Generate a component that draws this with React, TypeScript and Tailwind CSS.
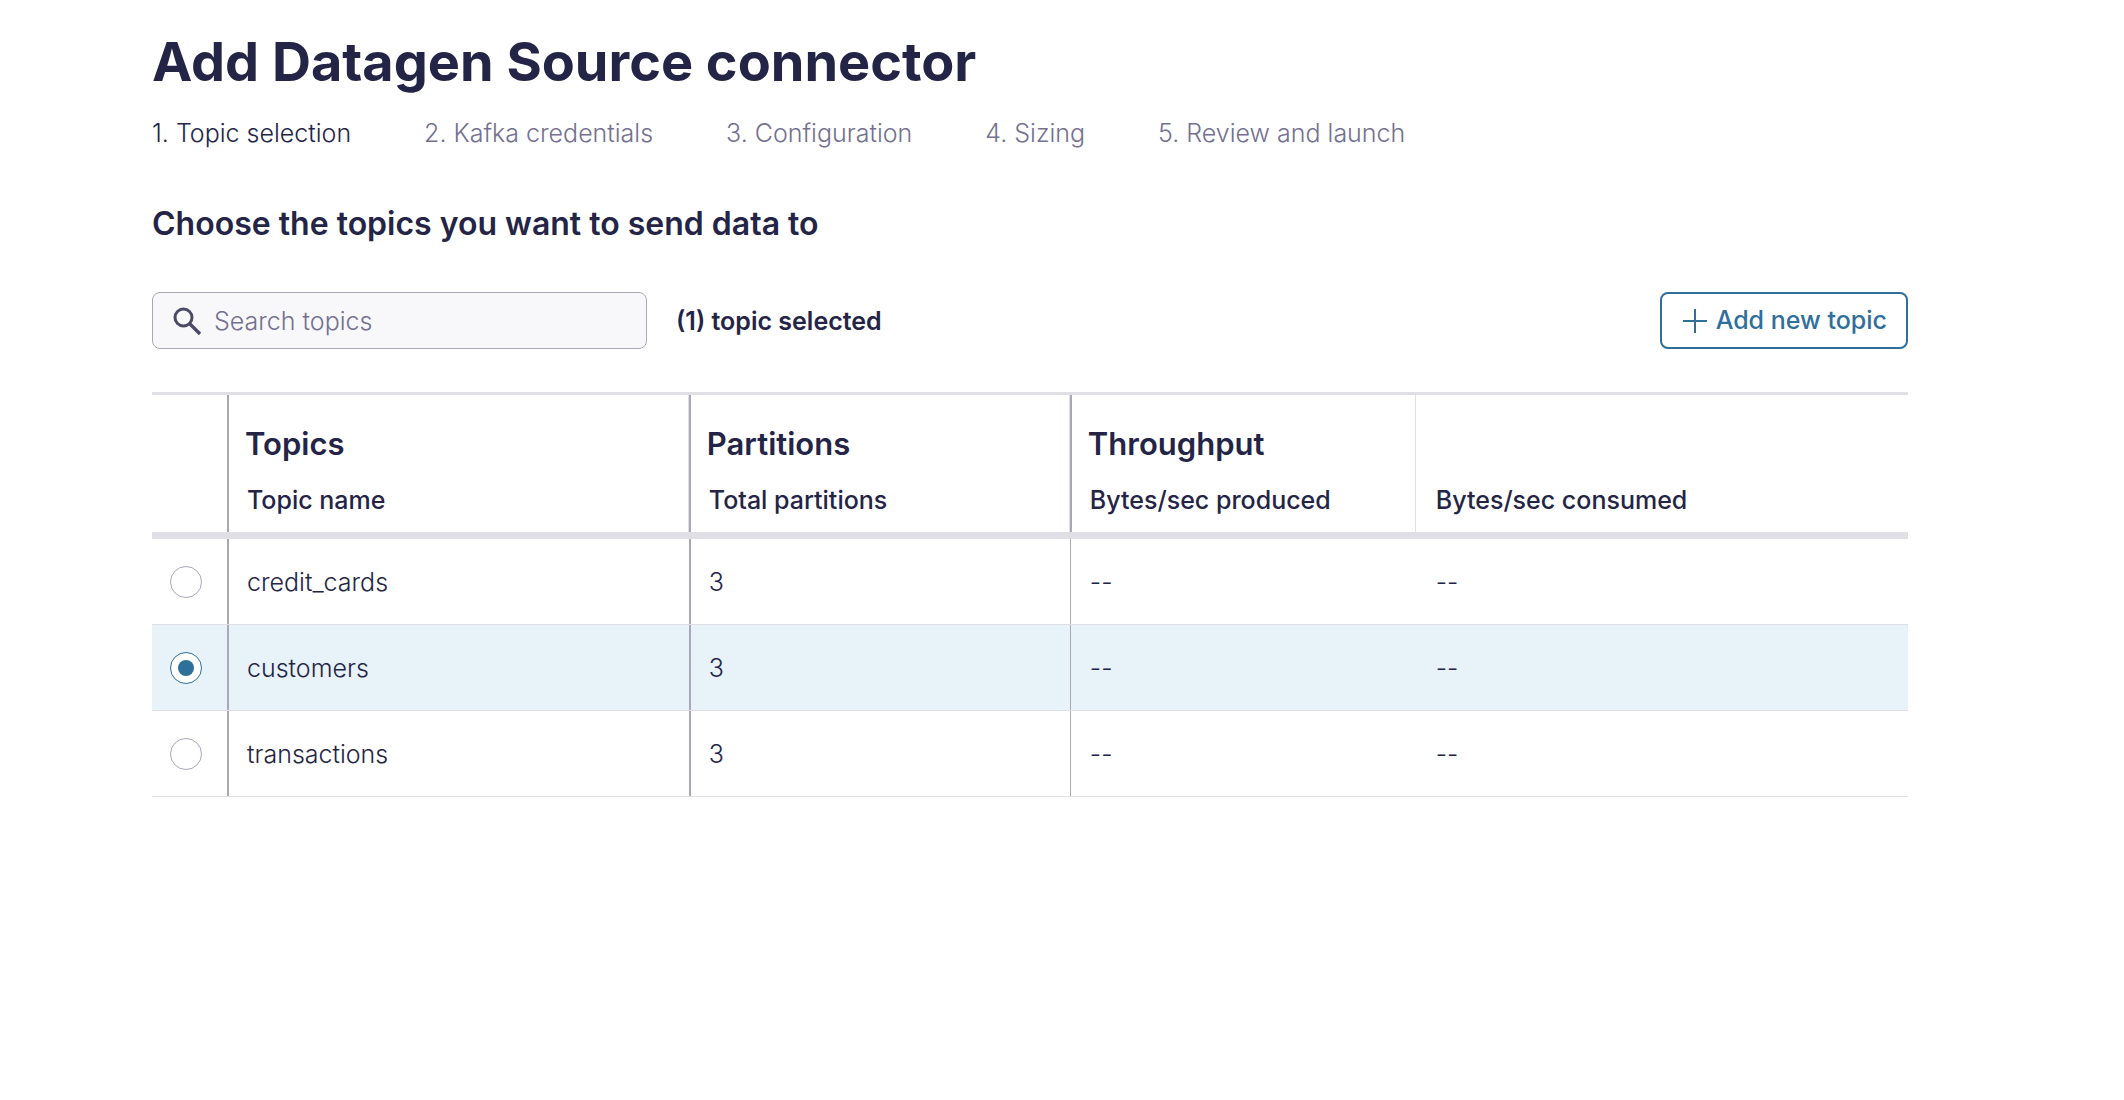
import { useState } from "react";

const steps = [
  "1. Topic selection",
  "2. Kafka credentials",
  "3. Configuration",
  "4. Sizing",
  "5. Review and launch",
];

const topics = [
  { name: "credit_cards", partitions: 3 },
  { name: "customers", partitions: 3 },
  { name: "transactions", partitions: 3 },
];

function SearchIcon() {
  return (
    <svg
      aria-hidden="true"
      viewBox="0 0 28 28"
      className="pointer-events-none absolute top-1/2 left-[21px] size-7 -translate-y-1/2 text-[#4b4b66]"
      fill="none"
      stroke="currentColor"
      strokeWidth="3"
    >
      <circle cx="10.5" cy="10.5" r="8.5" />
      <path d="M16.5 16.5L27 27" strokeWidth="3.4" />
    </svg>
  );
}

function PlusIcon() {
  return (
    <svg aria-hidden="true" viewBox="0 0 26 26" className="size-[26px]" fill="none" stroke="currentColor" strokeWidth="2">
      <path d="M13 1v24M1 13h24" />
    </svg>
  );
}

function HeaderCell({ group, label, className }: { group?: string; label: string; className: string }) {
  return (
    <th scope="col" className={"border-y-[#e0dfe6] border-t-3 border-b-7 pt-[29px] pb-3.5 pl-[18px] align-bottom font-medium " + className}>
      {group && <div className="mb-[19px] text-[31px] leading-10 font-semibold">{group}</div>}
      <div className="pl-0.5 text-[25px] leading-[35px]">{label}</div>
    </th>
  );
}

export default function App() {
  const [selected, setSelected] = useState("customers");
  const [query, setQuery] = useState("");

  return (
    <main className="min-h-screen bg-white pt-[31px] pr-[216px] pl-[152px] font-['Inter','Liberation_Sans',sans-serif] text-[25px] text-[#242446]">
      <h1 className="text-[54px] leading-[62px] font-bold">Add Datagen Source connector</h1>

      <ol className="mt-[22px] flex gap-[73px] leading-9 font-light">
        {steps.map((step, i) => (
          <li key={step} aria-current={i === 0 ? "step" : undefined} className={i === 0 ? "" : "text-[#737090]"}>
            {step}
          </li>
        ))}
      </ol>

      <h2 className="mt-[53px] text-[32px] leading-10 font-semibold">Choose the topics you want to send data to</h2>

      <div className="mt-12 flex items-center">
        <div className="relative w-[495px]">
          <SearchIcon />
          <input
            type="search"
            aria-label="Search topics"
            placeholder="Search topics"
            value={query}
            onChange={(e) => setQuery(e.target.value)}
            className="block h-[57px] w-full rounded-lg border border-[#a9a8b9] bg-[#f8f8fa] pr-4 pl-[61px] font-light outline-none placeholder:text-[#737090] placeholder:opacity-100"
          />
        </div>
        <span className="ml-[29px] pt-0.5 font-semibold">(1) topic selected</span>
        <button
          type="button"
          className="ml-auto flex h-[57px] items-center gap-2 rounded-lg border-2 border-[#2f6f9b] bg-white pr-[19px] pl-5 font-medium text-[#2f6f9b]"
        >
          <PlusIcon />
          Add new topic
        </button>
      </div>

      <table className="mt-[43px] w-full table-fixed border-separate border-spacing-0 text-left">
        <colgroup>
          <col className="w-[75px]" />
          <col className="w-[26.3%]" />
          <col className="w-[21.7%]" />
          <col className="w-[19.7%]" />
          <col />
        </colgroup>
        <thead>
          <tr>
            <td className="border-t-3 border-b-7 border-[#e0dfe6]" />
            <HeaderCell group="Topics" label="Topic name" className="shadow-[inset_2px_0_0_#a9a8b9,inset_-1px_0_0_#e0dfe6]" />
            <HeaderCell group="Partitions" label="Total partitions" className="shadow-[inset_2px_0_0_#a9a8b9,inset_-1px_0_0_#e0dfe6]" />
            <HeaderCell group="Throughput" label="Bytes/sec produced" className="shadow-[inset_2px_0_0_#a9a8b9,inset_-1px_0_0_#e0dfe6]" />
            <HeaderCell label="Bytes/sec consumed" className="" />
          </tr>
        </thead>
        <tbody className="font-light">
          {topics.map(({ name, partitions }) => {
            const cell = "h-[86px] border-b border-b-[#e0dfe6] p-0 pt-[3px] pl-5";
            return (
              <tr key={name} className={selected === name ? "bg-[#e7f2f9]" : ""}>
                <td className="border-b border-b-[#e0dfe6] p-0 pl-[18px]">
                  <input
                    type="radio"
                    name="topic"
                    aria-label={name}
                    checked={selected === name}
                    onChange={() => setSelected(name)}
                    className="m-0 grid size-8 appearance-none place-items-center rounded-full border border-[#a9a8b9] bg-white align-middle checked:border-[#2f6f9b] checked:before:size-4 checked:before:rounded-full checked:before:bg-[#2f6f9b]"
                  />
                </td>
                <td className={cell + " shadow-[inset_2px_0_0_#a9a8b9]"}>{name}</td>
                <td className={cell + " shadow-[inset_2px_0_0_#a9a8b9]"}>{partitions}</td>
                <td className={cell + " shadow-[inset_1px_0_0_#a9a8b9]"}>--</td>
                <td className={cell}>--</td>
              </tr>
            );
          })}
        </tbody>
      </table>
    </main>
  );
}
